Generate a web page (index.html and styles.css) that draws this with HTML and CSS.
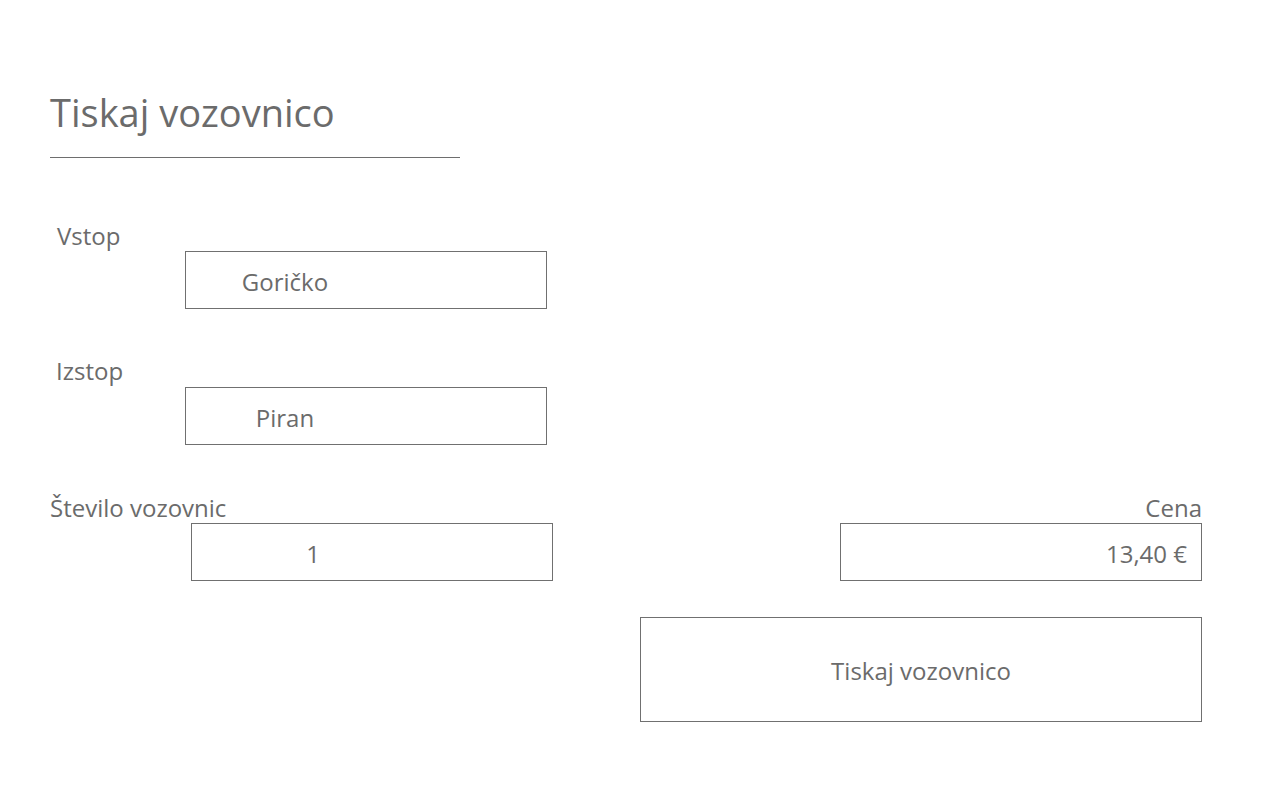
FILE: index.html
```html
<!DOCTYPE html>
<html lang="sl">
<head>
<meta charset="utf-8">
<title>Tiskaj vozovnico</title>
<link rel="stylesheet" href="styles.css">
</head>
<body>
<main class="page">
  <h1 class="title">Tiskaj vozovnico</h1>
  <div class="divider"></div>

  <section class="field field-first">
    <div class="label label-vstop">Vstop</div>
    <div class="box box-station"><span class="value value-station">Goričko</span></div>
  </section>

  <section class="field">
    <div class="label label-izstop">Izstop</div>
    <div class="box box-station"><span class="value value-station">Piran</span></div>
  </section>

  <section class="field row">
    <div class="col-left">
      <div class="label label-count">Število vozovnic</div>
      <div class="box box-count"><span class="value value-count">1</span></div>
    </div>
    <div class="col-right">
      <div class="label label-price">Cena</div>
      <div class="box box-price"><span class="value value-price">13,40 €</span></div>
    </div>
  </section>

  <div class="actions">
    <button class="print-btn" type="button">Tiskaj vozovnico</button>
  </div>
</main>
</body>
</html>
```

FILE: styles.css
```css
* { box-sizing: border-box; }

html, body {
  margin: 0;
  padding: 0;
  background: #ffffff;
}

body {
  font-family: "Open Sans", "Noto Sans", sans-serif;
  color: #6b6b6b;
}

.page {
  padding: 0 78px 0 50px;
}

.title {
  margin: 88px 0 0 0;
  font-size: 38px;
  line-height: 48px;
  font-weight: 400;
  color: #6b6b6b;
}

.divider {
  margin-top: 21px;
  width: 410px;
  height: 1px;
  background: #6e6e6e;
}

.field {
  margin-top: 53px;
}

.field-first {
  margin-top: 68px;
}

.label {
  font-size: 24px;
  line-height: 20px;
  height: 20px;
}

.label-vstop { margin-left: 7px; }
.label-izstop { margin-left: 6px; line-height: 18px; }
.label-count { margin-left: 0; }

.box {
  margin-top: 5px;
  width: 362px;
  height: 58px;
  border: 1px solid #707070;
  padding-top: 4px;
  font-size: 24px;
  line-height: 52px;
  white-space: nowrap;
}

.box-station { margin-left: 135px; }
.box-count { margin-left: 141px; }

.value { display: inline-block; text-align: center; }
.value-station { width: 198px; }
.value-count { width: 242px; }

.row {
  display: flex;
  justify-content: space-between;
}

.col-right {
  display: flex;
  flex-direction: column;
  align-items: flex-end;
}

.label-price { text-align: right; }

.box-price {
  text-align: right;
  padding-right: 14px;
}

.value-price { text-align: right; }

.actions {
  margin-top: 36px;
  display: flex;
  justify-content: flex-end;
}

.print-btn {
  width: 562px;
  height: 105px;
  margin: 0;
  padding: 2px 0 0 0;
  background: #ffffff;
  border: 1px solid #707070;
  border-radius: 0;
  font-family: "Open Sans", "Noto Sans", sans-serif;
  font-size: 24px;
  color: #6b6b6b;
  cursor: pointer;
}
```
